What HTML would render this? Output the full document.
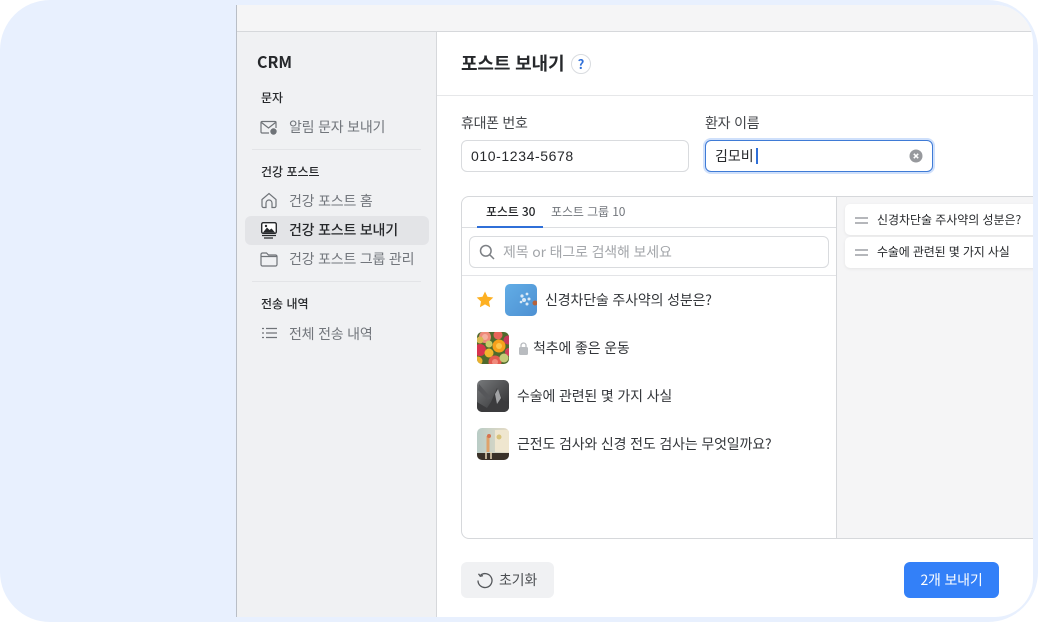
<!DOCTYPE html>
<html lang="ko">
<head>
<meta charset="utf-8">
<style>
html,body{margin:0;padding:0;background:#fff}
#r{position:relative;width:1038px;height:622px;overflow:hidden;background:#fff;font-family:"Noto Sans CJK KR","Liberation Sans",sans-serif;color:#26282b}
#bg{position:absolute;left:0;top:0;width:1038px;height:622px;border-radius:50px;background:#e8f0fe;overflow:hidden}
#app{position:absolute;left:236px;top:5px;width:797px;height:612px;background:#fff;border-radius:0 38px 38px 0;overflow:hidden}
.a{position:absolute}
.t{position:absolute;white-space:nowrap;line-height:20px;height:20px}
.lb{font-size:12px;font-weight:500;color:#26282b}
.m{font-size:14px;color:#72767c;left:289px;letter-spacing:-.2px}
.li{font-size:14px;color:#33363a;letter-spacing:-.15px}
.hr{position:absolute;height:1px}
#page{position:absolute;left:-236px;top:-5px;width:1038px;height:622px}
</style>
</head>
<body>
<div id="r">
<div id="bg"></div>
<div id="app">
<div id="page">
<div class="a" style="left:236px;top:5px;width:1px;height:612px;background:#b9bec6"></div>
<div class="a" style="left:237px;top:5px;width:800px;height:26px;background:#f5f5f6"></div>
<div class="hr" style="left:237px;top:31px;width:800px;background:#d6d8db"></div>
<div class="a" style="left:237px;top:32px;width:199px;height:590px;background:#f0f1f3"></div>
<div class="a" style="left:436px;top:32px;width:1px;height:590px;background:#d6d8db"></div>
<div class="t" style="left:257px;top:51px;font-size:16px;font-weight:700;color:#26282b">CRM</div>
<div class="t lb" style="left:261px;top:88px">문자</div>
<svg class="a" style="left:260px;top:120px" width="18" height="16" viewBox="0 0 18 16" fill="none" stroke="#6f7378" stroke-width="1.200"><path d="M9 13H2a1 1 0 0 1-1-1V2.500a1 1 0 0 1 1-1h13a1 1 0 0 1 1 1V8"/><path d="M1.500 2.500 8.500 8l7-5.500"/><circle cx="13.500" cy="11.500" r="3.200" fill="#6f7378" stroke="none"/></svg>
<div class="t m" style="top:117px">알림 문자 보내기</div>
<div class="hr" style="left:252px;top:149px;width:169px;background:#e3e4e7"></div>
<div class="t lb" style="left:261px;top:162px">건강 포스트</div>
<svg class="a" style="left:261px;top:192px" width="16" height="17" viewBox="0 0 16 17" fill="none" stroke="#6f7378" stroke-width="1.200"><path d="M1 7.500 8 1.500l7 6V14a1.500 1.500 0 0 1-1.500 1.500H11V11a3 3 0 0 0-6 0v4.500H2.500A1.500 1.500 0 0 1 1 14z"/></svg>
<div class="t m" style="top:191px">건강 포스트 홈</div>
<div class="a" style="left:245px;top:216px;width:184px;height:29px;background:#e3e4e7;border-radius:6px"></div>
<svg class="a" style="left:261px;top:222px" width="16" height="17" viewBox="0 0 16 17"><rect x=".7" y=".7" width="14.600" height="10.600" rx="1.500" fill="#fff" stroke="#26282b" stroke-width="1.400"/><path d="M2 10.500 6 5.500l2.500 2.500 2-1.500 3.500 4z" fill="#26282b"/><circle cx="5" cy="4" r="1.200" fill="#26282b"/><path d="M1 13.500h14M3 16h9" stroke="#26282b" stroke-width="1.300"/></svg>
<div class="t li" style="left:289px;top:220px;font-weight:500;color:#26282b;letter-spacing:-.2px">건강 포스트 보내기</div>
<svg class="a" style="left:260px;top:252px" width="18" height="15" viewBox="0 0 18 15" fill="none" stroke="#6f7378" stroke-width="1.200"><path d="M1 3V2.500A1.500 1.500 0 0 1 2.500 1h4l2 2H15.500A1.500 1.500 0 0 1 17 4.500V12.500A1.500 1.500 0 0 1 15.500 14H2.500A1.500 1.500 0 0 1 1 12.500zM1 4.500h16"/></svg>
<div class="t m" style="top:249px">건강 포스트 그룹 관리</div>
<div class="hr" style="left:252px;top:281px;width:169px;background:#e3e4e7"></div>
<div class="t lb" style="left:261px;top:294px">전송 내역</div>
<svg class="a" style="left:262px;top:327px" width="15" height="12" viewBox="0 0 15 12" fill="none" stroke="#6f7378" stroke-width="1.300"><path d="M4 1.500h11M4 6h11M4 10.500h11M0 1.500h2M0 6h2M0 10.500h2"/></svg>
<div class="t m" style="top:324px">전체 전송 내역</div>

<div class="t" style="left:461px;top:53px;font-size:18px;font-weight:700;color:#26282b;letter-spacing:-.15px">포스트 보내기</div>
<div class="a" style="left:571px;top:54px;width:18px;height:18px;border:1px solid #d9dce0;border-radius:50%;text-align:center;font-size:13px;line-height:18px;font-weight:700;color:#2f6fd8">?</div>
<div class="hr" style="left:437px;top:95px;width:600px;background:#e6e7e9"></div>

<div class="t" style="left:461px;top:113px;font-size:14px;color:#43464a;letter-spacing:-.3px">휴대폰 번호</div>
<div class="t" style="left:705px;top:113px;font-size:14px;color:#43464a;letter-spacing:-.2px">환자 이름</div>
<div class="a" style="left:461px;top:140px;width:228px;height:32px;box-sizing:border-box;border:1px solid #d9dbde;border-radius:6px;background:#fff"></div>
<div class="t" style="left:471px;top:146px;font-family:'Liberation Sans',sans-serif;font-size:14px;color:#26282b;letter-spacing:.6px">010-1234-5678</div>
<div class="a" style="left:705px;top:140px;width:228px;height:32px;box-sizing:border-box;border:1px solid #3f7bd6;border-radius:6px;background:#fff;box-shadow:0 0 0 2px #cfe0fb"></div>
<div class="t" style="left:715px;top:146px;font-size:14px;color:#26282b">김모비</div>
<div class="a" style="left:756px;top:148px;width:2px;height:16px;background:#2f6fd8"></div>
<svg class="a" style="left:909px;top:149px" width="14" height="14" viewBox="0 0 14 14"><circle cx="7" cy="7" r="6.500" fill="#97999d"/><path d="M4.800 4.800l4.400 4.400M9.200 4.800l-4.400 4.400" stroke="#fff" stroke-width="1.500"/></svg>

<div class="a" style="left:461px;top:196px;width:600px;height:343px;box-sizing:border-box;border:1px solid #d6d8db;border-radius:8px;background:#fff"></div>
<div class="a" style="left:837px;top:197px;width:200px;height:341px;background:#f5f5f6"></div>
<div class="a" style="left:836px;top:197px;width:1px;height:341px;background:#d6d8db"></div>
<div class="t" style="left:486px;top:202px;font-size:12px;font-weight:500;color:#26282b;letter-spacing:-.15px">포스트 30</div>
<div class="t" style="left:551px;top:202px;font-size:12px;color:#72767c;letter-spacing:-.1px">포스트 그룹 10</div>
<div class="hr" style="left:462px;top:227px;width:374px;background:#dcdee1"></div>
<div class="a" style="left:477px;top:226px;width:66px;height:2px;background:#2f6fd8"></div>
<div class="a" style="left:469px;top:236px;width:360px;height:32px;box-sizing:border-box;border:1px solid #d9dbde;border-radius:6px;background:#fff"></div>
<svg class="a" style="left:479px;top:244px" width="16" height="16" viewBox="0 0 16 16" fill="none" stroke="#7d8085" stroke-width="1.500"><circle cx="6.800" cy="6.800" r="5.300"/><path d="M10.800 10.800 15 15"/></svg>
<div class="t" style="left:503px;top:242px;font-size:14px;color:#a3a6aa;letter-spacing:-.15px">제목 or 태그로 검색해 보세요</div>
<div class="hr" style="left:462px;top:275px;width:374px;background:#e3e4e7"></div>

<svg class="a" style="left:476px;top:291px" width="18" height="17" viewBox="0 0 18 17"><path d="M9 .5l2.500 5.300 5.800.7-4.300 4 1.100 5.800L9 13.400l-5.100 2.900L5 10.500.7 6.500l5.800-.7z" fill="#fdb022"/></svg>
<svg class="a" style="left:505px;top:284px;border-radius:5px" width="32" height="32" viewBox="0 0 32 32">
<defs><linearGradient id="g1" x1="0" y1="0" x2="1" y2="1"><stop offset="0" stop-color="#62ade6"/><stop offset="1" stop-color="#4d90d2"/></linearGradient></defs>
<rect width="32" height="32" fill="url(#g1)"/><g fill="#dbe9f6"><circle cx="17" cy="12" r="1.600"/><circle cx="22" cy="10" r="1.400"/><circle cx="19" cy="16" r="2"/><circle cx="24" cy="15" r="1.500"/><circle cx="16" cy="18" r="1.300"/><circle cx="22" cy="20" r="1.500"/></g><circle cx="30" cy="19" r="2.500" fill="#b4613c"/>
</svg>
<div class="t li" style="left:545px;top:290px">신경차단술 주사약의 성분은?</div>

<svg class="a" style="left:477px;top:332px;border-radius:5px" width="32" height="32" viewBox="0 0 32 32">
<rect width="32" height="32" fill="#4f6a2c"/>
<circle cx="8" cy="5" r="6" fill="#ee8a7a"/><circle cx="8" cy="5" r="3" fill="#f4b0a0"/>
<circle cx="21" cy="3" r="4.500" fill="#e8645a"/><circle cx="31" cy="8" r="4.500" fill="#c6385a"/>
<circle cx="3" cy="8" r="3.500" fill="#d8b952"/><circle cx="3" cy="18" r="6" fill="#d8344e"/>
<circle cx="22" cy="14" r="6.500" fill="#f6a01b"/><circle cx="22" cy="14" r="3" fill="#fcc64a"/>
<circle cx="12" cy="12" r="3.500" fill="#c8cc6a"/><circle cx="12" cy="21" r="4.500" fill="#f2b62c"/>
<circle cx="32" cy="20" r="4" fill="#d2405c"/><circle cx="1" cy="29" r="4.500" fill="#eab12e"/>
<circle cx="18" cy="30" r="6.500" fill="#e25a4f"/><circle cx="18" cy="30" r="3" fill="#f08a7c"/>
<circle cx="27" cy="26" r="4.500" fill="#c4cb78"/>
</svg>
<svg class="a" style="left:518px;top:342px" width="11" height="13" viewBox="0 0 11 13"><rect x="1" y="5" width="9" height="8" rx="1.500" fill="#b9bcc0"/><path d="M3 5.500V3.500a2.500 2.500 0 0 1 5 0v2" fill="none" stroke="#b9bcc0" stroke-width="1.300"/></svg>
<div class="t li" style="left:533px;top:338px">척추에 좋은 운동</div>

<svg class="a" style="left:477px;top:380px;border-radius:5px" width="32" height="32" viewBox="0 0 32 32">
<defs><linearGradient id="g2" x1="0" y1="0" x2="1" y2="1"><stop offset="0" stop-color="#77797b"/><stop offset="1" stop-color="#2c2c2e"/></linearGradient></defs>
<rect width="32" height="32" fill="url(#g2)"/><path d="M0 22 10 28 14 22 20 8 26 20 32 24V32H0z" fill="#3b3b3d"/><path d="M18 14l3-5 3 9-4 6z" fill="#a2a3a5"/><path d="M2 4l12 14-3 2L1 10z" fill="#56575a"/>
</svg>
<div class="t li" style="left:517px;top:386px">수술에 관련된 몇 가지 사실</div>

<svg class="a" style="left:477px;top:428px;border-radius:5px" width="32" height="32" viewBox="0 0 32 32">
<defs><linearGradient id="g3" x1="0" y1="0" x2="1" y2="0"><stop offset="0" stop-color="#b9ccc6"/><stop offset="1" stop-color="#e6dcc6"/></linearGradient></defs>
<rect width="32" height="32" fill="url(#g3)"/><rect x="18" y="2" width="14" height="22" fill="#efe6cf"/><path d="M11 8v16" stroke="#dfa26a" stroke-width="3"/><circle cx="12" cy="8" r="2" fill="#d6734f"/><circle cx="22" cy="9" r="2.500" fill="#d8c37a"/><rect y="25" width="32" height="7" fill="#3a3128"/><path d="M9 24v7M14 24v7" stroke="#e9d9b8" stroke-width="1.500"/>
</svg>
<div class="t li" style="left:517px;top:434px">근전도 검사와 신경 전도 검사는 무엇일까요?</div>

<div class="a" style="left:845px;top:204px;width:200px;height:31px;background:#fff;border-radius:5px;box-shadow:0 1px 3px rgba(0,0,0,.07)"></div>
<div class="a" style="left:855px;top:217px;width:13px;height:2px;background:#b5b7bb"></div>
<div class="a" style="left:855px;top:222px;width:13px;height:2px;background:#b5b7bb"></div>
<div class="t" style="left:877px;top:210px;font-size:12px;color:#26282b;letter-spacing:-.05px">신경차단술 주사약의 성분은?</div>
<div class="a" style="left:845px;top:237px;width:200px;height:31px;background:#fff;border-radius:5px;box-shadow:0 1px 3px rgba(0,0,0,.07)"></div>
<div class="a" style="left:855px;top:249px;width:13px;height:2px;background:#b5b7bb"></div>
<div class="a" style="left:855px;top:254px;width:13px;height:2px;background:#b5b7bb"></div>
<div class="t" style="left:877px;top:242px;font-size:12px;color:#26282b;letter-spacing:-.15px">수술에 관련된 몇 가지 사실</div>

<div class="a" style="left:461px;top:562px;width:93px;height:36px;background:#f0f1f3;border-radius:6px"></div>
<svg class="a" style="left:477px;top:572px" width="16" height="17" viewBox="0 0 16 17" fill="none" stroke="#55585c" stroke-width="1.300"><path d="M3.500 3.200A7 7 0 1 1 1 8.500"/><path d="M1.500 1.800 3.300 4.300 6 3.600"/></svg>
<div class="t" style="left:499px;top:570px;font-size:14px;color:#4b4e52;letter-spacing:-.2px">초기화</div>
<div class="a" style="left:904px;top:562px;width:95px;height:36px;background:#3380f8;border-radius:6px"></div>
<div class="t" style="left:904px;top:570px;width:95px;text-align:center;font-size:14px;color:#fff;letter-spacing:-.2px">2개 보내기</div>
</div>
</div>
</div>
</body>
</html>
